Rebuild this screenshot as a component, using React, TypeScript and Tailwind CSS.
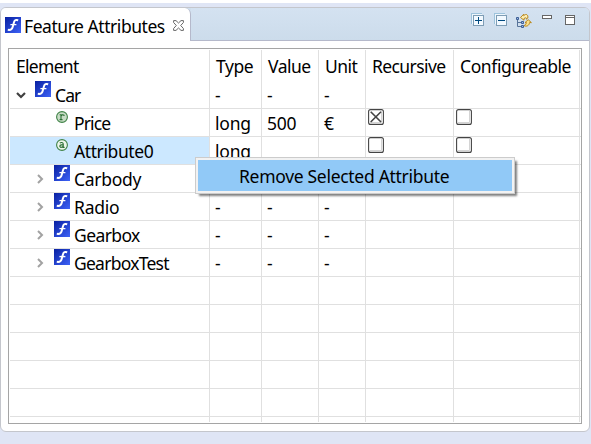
import React from "react";

type Kind = "feature" | "recursive" | "attribute";
type Row = {
  name: string;
  kind: Kind;
  level: 0 | 1;
  state?: "open" | "closed";
  type: string;
  value: string;
  unit: string;
  recursive?: boolean;
  configurable?: boolean;
  selected?: boolean;
  tracking: string;
};

const ROWS: Row[] = [
  { name: "Car", kind: "feature", level: 0, state: "open", type: "-", value: "-", unit: "-", tracking: "tracking-[-0.9px]" },
  { name: "Price", kind: "recursive", level: 1, type: "long", value: "500", unit: "€", recursive: true, configurable: false, tracking: "tracking-[-0.85px]" },
  { name: "Attribute0", kind: "attribute", level: 1, type: "long", value: "", unit: "", recursive: false, configurable: false, selected: true, tracking: "tracking-[-0.4px]" },
  { name: "Carbody", kind: "feature", level: 1, state: "closed", type: "", value: "", unit: "", tracking: "tracking-[-0.3px]" },
  { name: "Radio", kind: "feature", level: 1, state: "closed", type: "-", value: "-", unit: "-", tracking: "tracking-[-0.25px]" },
  { name: "Gearbox", kind: "feature", level: 1, state: "closed", type: "-", value: "-", unit: "-", tracking: "tracking-[-0.6px]" },
  { name: "GearboxTest", kind: "feature", level: 1, state: "closed", type: "-", value: "-", unit: "-", tracking: "tracking-[-0.75px]" },
];

const COLS = "grid grid-cols-[200px_52px_57px_47px_88px_126px]";
const CELL = "border-r border-[#e0e0e0]";

function FeatureIcon() {
  return (
    <svg width="16" height="16" viewBox="0 0 16 16" className="block shrink-0">
      <defs>
        <linearGradient id="feature" x1="0" y1="0" x2="1" y2="1">
          <stop offset="0" stopColor="#0820a0" />
          <stop offset="1" stopColor="#3e63f8" />
        </linearGradient>
      </defs>
      <rect width="16" height="16" fill="url(#feature)" />
      <path d="M13.2 3.3C10.8 2.6 9.6 3 9 5.2L7.5 10.6C6.9 12.7 5.6 13.3 2.8 12.8" fill="none" stroke="#fff" strokeWidth="2" />
      <path d="M5.4 7.6H11.4" fill="none" stroke="#fff" strokeWidth="1.4" />
    </svg>
  );
}

function AttributeIcon({ recursive }: { recursive: boolean }) {
  return (
    <svg width="12" height="12" viewBox="0 0 12 12" className="block shrink-0">
      <circle cx="6" cy="6" r="5.4" fill={recursive ? "#c8dcc6" : "#edf5ea"} stroke="#3f8246" strokeWidth="1.1" />
      {recursive ? (
        <path d="M3.6 3.7H5V8.5M3.6 8.6H6.5M5 5.2C5.7 3.8 7 3.4 8 4.2V5" fill="none" stroke="#2c7035" strokeWidth="1.1" />
      ) : (
        <path d="M3.8 4C5 3.2 7.2 3.2 7.2 5V8.3H8.6M7.2 5.8H5.3C3.4 6 3.5 8.3 5 8.3C6.2 8.3 7 7.7 7.2 7" fill="none" stroke="#2c7035" strokeWidth="1.2" />
      )}
    </svg>
  );
}

function Checkbox({ checked }: { checked: boolean }) {
  return (
    <svg width="16" height="16" viewBox="0 0 16 16" className="ml-[2px] block">
      <rect x=".6" y=".6" width="14.8" height="14.8" rx="2" fill="#fff" stroke="#444" strokeWidth="1.1" />
      <path d="M2 13.5H13.5V2" fill="none" stroke="#d4d4d4" />
      {checked && <path d="M2.7 2.7L13 13M13 2.7L2.7 13" stroke="#444" strokeWidth="1.6" />}
    </svg>
  );
}

function Twisty({ state }: { state?: "open" | "closed" }) {
  if (state === "open")
    return (
      <svg width="10" height="7" viewBox="0 0 10 7" className="mt-[11px] block shrink-0">
        <path d="M1 1L5 5L9 1" fill="none" stroke="#404040" strokeWidth="2.2" />
      </svg>
    );
  if (state === "closed")
    return (
      <svg width="10" height="10" viewBox="0 0 10 10" className="mt-[9px] block shrink-0">
        <path d="M3 1L7 5L3 9" fill="none" stroke="#a2a2a2" strokeWidth="2" />
      </svg>
    );
  return <span className="w-[10px] shrink-0" />;
}

function BoxesIcon({ plus }: { plus: boolean }) {
  return (
    <svg width="13" height="13" viewBox="0 0 13 13" className="block" shapeRendering="crispEdges">
      <path d="M1 1H11V3H3V11H1Z" fill="#eef6fc" />
      <path d="M.5 11V.5H11" fill="none" stroke="#9dc3dc" />
      <rect x="2.5" y="2.5" width="10" height="10" fill="#f2f9ff" stroke="#7e9db5" />
      <path d="M4 7.5H11" stroke="#004a80" />
      {plus && <path d="M7.5 4V11" stroke="#004a80" />}
    </svg>
  );
}

function TreeSyncIcon() {
  return (
    <svg width="16" height="16" viewBox="0 0 16 16" className="block">
      <path d="M1.5 6V13.5H5M1.5 9.5H5" fill="none" stroke="#58749a" />
      <path d="M.5 4.5H2.5V6.5H.5ZM5.5 8.5H7.5V10.5H5.5ZM5.5 12.5H7.5V14.5H5.5Z" fill="#9db9e4" stroke="#3d5f96" />
      <path d="M4.5 4.5L7.7 1.2V2.7C10.3 .2 12.3 1.8 11.8 5L10.5 6.2C10.8 4.6 9.8 4.4 8 5.5V7.2Z" fill="#fdeeb4" stroke="#b8861b" />
      <path d="M15.4 9.6L12.2 6.7L9 9.6H10.4C10 11.6 9 12.2 8 12.6C10.4 14 13.2 12.6 13.6 9.6Z" fill="#fbe08a" stroke="#b8861b" />
    </svg>
  );
}

function CloseIcon() {
  return (
    <svg width="11" height="11" viewBox="0 0 11 11" className="mt-[12px] ml-[8px] block">
      <path d="M.6 .6H3L5.5 3L8 .6H10.4V2.5L7.7 5.5L10.4 8.5V10.4H8L5.5 8L3 10.4H.6V8.5L3.3 5.5L.6 2.5Z" fill="#fff" stroke="#686868" strokeWidth="1" />
    </svg>
  );
}

function Header() {
  const text = "h-[31px] pl-[6px] pt-[3px] leading-[26px]";
  return (
    <div className={COLS}>
      <div className={`${CELL} ${text} tracking-[-0.7px]`}>Element</div>
      <div className={`${CELL} ${text} tracking-[-0.45px]`}>Type</div>
      <div className={`${CELL} ${text} tracking-[-0.5px]`}>Value</div>
      <div className={`${CELL} ${text} tracking-[-0.5px]`}>Unit</div>
      <div className={`${CELL} ${text} tracking-[-0.6px]`}>Recursive</div>
      <div className={`${CELL} ${text} tracking-[-0.4px]`}>Configureable</div>
    </div>
  );
}

function TreeRow({ row }: { row: Row }) {
  const text = "pl-[5px] pt-px leading-[26px] tracking-[-0.2px]";
  return (
    <div className={`${COLS} h-[28px] border-b border-[#e0e0e0]`}>
      <div className={`${CELL} flex ${row.selected ? "bg-[#cce8ff]" : ""} ${row.level === 0 ? "pl-[6px]" : "pl-[25px]"}`}>
        <Twisty state={row.state} />
        <div className="ml-[9px] flex w-[20px] shrink-0">
          {row.kind === "feature" ? (
            <FeatureIcon />
          ) : (
            <div className="ml-[2px] mt-[2px]">
              <AttributeIcon recursive={row.kind === "recursive"} />
            </div>
          )}
        </div>
        <span className={`whitespace-nowrap pt-px leading-[26px] ${row.tracking}`}>{row.name}</span>
      </div>
      <div className={`${CELL} ${text}`}>{row.type}</div>
      <div className={`${CELL} ${text}`}>{row.value}</div>
      <div className={`${CELL} ${text}`}>{row.unit}</div>
      <div className={CELL}>{row.recursive !== undefined && <Checkbox checked={row.recursive} />}</div>
      <div className={CELL}>{row.configurable !== undefined && <Checkbox checked={row.configurable} />}</div>
    </div>
  );
}

function EmptyRow() {
  return (
    <div className={`${COLS} h-[28px] border-b border-[#e0e0e0]`}>
      {[0, 1, 2, 3, 4, 5].map((i) => (
        <div key={i} className={CELL} />
      ))}
    </div>
  );
}

export default function App() {
  return (
    <div className="relative h-[444px] w-[591px] overflow-hidden border-t-[3px] border-white bg-[#dfe5f5] pt-[4px] font-['Noto_Sans',sans-serif] text-[17.5px] text-black">
      <div className="flex h-[425px] w-[590px] flex-col overflow-hidden rounded-[6px] border border-[#c4c6cc] bg-white">
        <div className="flex h-[33px] shrink-0 bg-[#d0dfee]">
          <div className="flex w-[190px] shrink-0 rounded-tr-[6px] border-r border-[#b5b9cb] bg-white">
            <div className="ml-[4px] mt-[9px]">
              <FeatureIcon />
            </div>
            <span className="ml-[3px] mt-[5px] w-[141px] whitespace-nowrap leading-[26px] tracking-[-0.45px]">Feature Attributes</span>
            <CloseIcon />
          </div>
          <div className="flex flex-1 items-start border-b border-[#b5b9cb] bg-linear-to-b from-[#d4e2f1] to-[#ccdceb] pl-[280px] pt-[5px]">
            <BoxesIcon plus />
            <div className="ml-[10px]">
              <BoxesIcon plus={false} />
            </div>
            <div className="ml-[9px]">
              <TreeSyncIcon />
            </div>
            <div className="ml-[10px] mt-[2px] h-[4px] w-[10px] border border-[#666] bg-white" />
            <div className="ml-[13px] mt-[2px] h-[10px] w-[10px] border border-[#666] bg-white">
              <div className="mt-px h-px bg-[#666]" />
            </div>
          </div>
        </div>
        <div className="ml-[7px] mt-[7px] h-[376px] w-[574px] shrink-0 border border-[#a5a5a5] bg-white pl-px pt-px">
          <Header />
          {ROWS.map((row) => (
            <TreeRow key={row.name} row={row} />
          ))}
          {[0, 1, 2, 3, 4].map((i) => (
            <EmptyRow key={i} />
          ))}
          <div className={`${COLS} h-[5px]`}>
            {[0, 1, 2, 3, 4, 5].map((i) => (
              <div key={i} className={CELL} />
            ))}
          </div>
        </div>
      </div>
      <div className="absolute left-[195px] top-[154px] h-[37px] w-[320px] border border-[#ccc] bg-[#f2f2f2] p-[2px] shadow-[3px_3px_2px_-1px_rgba(0,0,0,0.5)]">
        <div className="h-[31px] whitespace-nowrap bg-[#91c9f7] pl-[41px] leading-[32px] tracking-[-0.3px]">Remove Selected Attribute</div>
      </div>
    </div>
  );
}
